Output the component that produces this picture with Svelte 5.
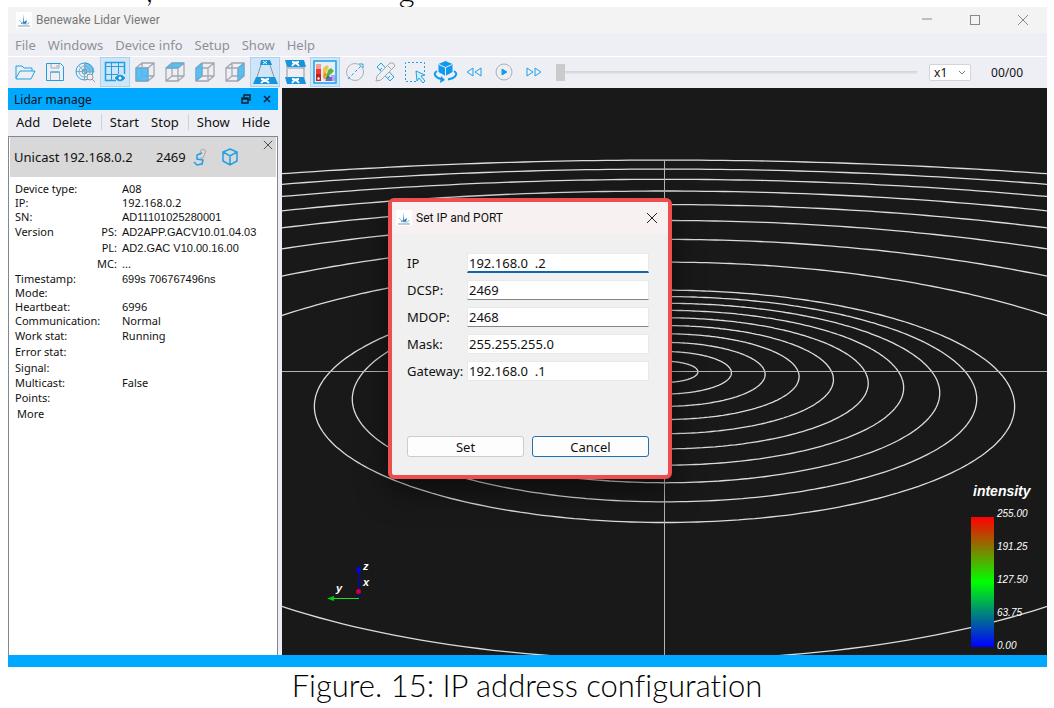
<script>
	const menus = ['File', 'Windows', 'Device info', 'Setup', 'Show', 'Help'];

	// Cube views: one face is filled, the rest is wireframe
	const cubes = [
		{ name: 'Front view', face: '3,8 15,8 15,21 3,21' },
		{ name: 'Top view', face: '3,8 9,3 21,3 15,8' },
		{ name: 'Left view', face: '3,8 9,3 9,16 3,21' },
		{ name: 'Right view', face: '15,8 21,3 21,16 15,21' }
	];

	const details = [
		{ label: 'Device type:', value: 'A08' },
		{ label: 'IP:', value: '192.168.0.2' },
		{ label: 'SN:', value: 'AD11101025280001', plain: true },
		{ label: 'Version', sub: 'PS:', value: 'AD2APP.GACV10.01.04.03', tall: true, plain: true },
		{ label: '', sub: 'PL:', value: 'AD2.GAC V10.00.16.00', tall: true, plain: true },
		{ label: '', sub: 'MC:', value: '...', tall: true },
		{ label: 'Timestamp:', value: '699s 706767496ns', plain: true },
		{ label: 'Mode:', value: '' },
		{ label: 'Heartbeat:', value: '6996' },
		{ label: 'Communication:', value: 'Normal' },
		{ label: 'Work stat:', value: 'Running', tall: true },
		{ label: 'Error stat:', value: '', tall: true },
		{ label: 'Signal:', value: '', tall: true },
		{ label: 'Multicast:', value: 'False' },
		{ label: 'Points:', value: '', tall: true }
	];

	const legend = ['255.00', '191.25', '127.50', '63.75', '0.00'];

	let fields = $state([
		{ id: 'ip', label: 'IP', value: '192.168.0  .2', kind: 'focus' },
		{ id: 'dcsp', label: 'DCSP:', value: '2469', kind: 'line' },
		{ id: 'mdop', label: 'MDOP:', value: '2468', kind: 'line' },
		{ id: 'mask', label: 'Mask:', value: '255.255.255.0', kind: '' },
		{ id: 'gateway', label: 'Gateway:', value: '192.168.0  .1', kind: '' }
	]);

	let speed = $state('x1');
	let frame = $state(0);

	// --- RANGE RINGS ---
	// ground circles seen through a tilted camera
	const radii = [1, 2, 3, 4, 5, 6, 7, 8, 9, 10, 15, 20, 25, 30, 35, 40, 45, 50];
	const CX = 382.5;
	const CY = 283.5;

	function ring(r) {
		let d = '';
		let pen = 'M';
		for (let i = 0; i <= 360; i++) {
			const t = ((i - 90) * Math.PI) / 180;
			const x = r * Math.cos(t);
			const y = r * Math.sin(t);
			const w = 1 + 0.03 * y;
			// behind the camera
			if (w < 0.1) {
				pen = 'M';
				continue;
			}
			d += `${pen}${(CX + (33.4 * x) / w).toFixed(1)} ${(CY - (10.57 * y) / w).toFixed(1)}`;
			pen = 'L';
		}
		return d;
	}
</script>

{#snippet logo()}
	<svg class="logo" viewBox="0 0 16 16" aria-hidden="true">
		<rect width="16" height="16" fill="#fff" />
		<path d="M8 2v8l3-2-1 4H5l1-2 1 1z" fill="#1f78c0" />
		<path d="M3 8l4 4h5l1-2" fill="none" stroke="#8fc6e8" />
		<path d="M2 14h12" stroke="#8a97a5" />
	</svg>
{/snippet}

<main>
	<p class="previous"><span>,</span><span>g</span></p>

	<figure>
		<div class="window">
			<header class="titlebar">
				{@render logo()}
				<h1>Benewake Lidar Viewer</h1>
				<div class="controls">
					<button aria-label="Minimize"><svg viewBox="0 0 12 12"><path d="M1 5h10" /></svg></button>
					<button aria-label="Maximize"><svg viewBox="0 0 12 12"><rect x="1.5" y="1.5" width="9" height="9" /></svg></button>
					<button aria-label="Close"><svg viewBox="0 0 12 12"><path d="M1 1l10 10M11 1L1 11" /></svg></button>
				</div>
			</header>

			<nav class="menubar">
				{#each menus as item}
					<button>{item}</button>
				{/each}
			</nav>

			<div class="toolbar">
				<button aria-label="Open">
					<svg viewBox="0 0 24 24"><path d="M3 18V6h6l2 2h8v3M3 18l4-7h15l-4 8H3z" /></svg>
				</button>
				<button aria-label="Save">
					<svg viewBox="0 0 24 24">
						<path d="M3.5 3.5h14l3 3v14h-17z" />
						<path d="M7.500 20v-8h9v8M8 4v4h8V4M14 5v2" stroke="#9ab" />
						<path d="M7.500 12h9" />
					</svg>
				</button>
				<button aria-label="Point cloud">
					<svg viewBox="0 0 24 24">
						<circle cx="11.500" cy="11.500" r="8.500" />
						<circle cx="11.500" cy="11.500" r="5.500" stroke="#7ab" />
						<circle cx="11.500" cy="11.500" r="2.500" />
						<path d="M12 12V3a9 9 0 0 1 9 9z" fill="#4db3ea" opacity=".7" />
						<path d="M3 11.500h17M11.500 3v17M6 6l11 11" stroke="#8ab" />
						<circle cx="17" cy="17" r="3" stroke="#999" fill="#eeeff5" />
						<path d="M19 19l3 3" stroke="#999" />
					</svg>
				</button>
				<button class="active" aria-label="Grid">
					<svg viewBox="0 0 24 24">
						<path d="M13 20.500H2.500v-18h19V14" stroke-width="1.500" />
						<path d="M8.500 3v17M15.500 3v11M3 14.500h12M3 6.500h18" />
						<path d="M12 18q5-6 10 0q-5 6-10 0z" fill="#1694dc" />
						<circle cx="17" cy="18" r="1.500" fill="#fff" stroke="none" />
					</svg>
				</button>
				{#each cubes as cube}
					<button aria-label={cube.name}>
						<svg viewBox="0 0 24 24">
							<path d="M3 8h12v13H3zM3 8l6-5h12v13l-6 5M15 8l6-5M9 3v13h12M9 16l-6 5" stroke="#a3a8ad" stroke-width="1.300" />
							<polygon points={cube.face} fill="#4cb8f2" fill-opacity=".9" stroke="#6ba9cc" />
						</svg>
					</button>
				{/each}
				<button class="active" aria-label="Perspective">
					<svg viewBox="0 0 24 24">
						<path d="M8 0h9l2 5H7z" fill="#1694dc" stroke="none" />
						<path d="M3 17h19l3 7H0z" fill="#1694dc" stroke="none" />
						<path d="M8 5L4 17M17 5l4 12" stroke="#8d959c" />
						<path d="M10 1l4 3M14 1l-4 3" stroke="#fff" />
						<path d="M8 19q4 0 8 4M16 19q-4 0-8 4" stroke="#fff" stroke-width="1.800" />
					</svg>
				</button>
				<button aria-label="Parallel">
					<svg viewBox="0 0 24 24">
						<path d="M2 0h19l2 7H4zM2 17h19l2 7H4z" fill="#1694dc" stroke="none" />
						<path d="M4 6v12M21 6v12M5 8h16" stroke="#8d959c" />
						<path d="M9 2q4 0 7 4M16 2q-4 0-7 4M9 19q4 0 7 4M16 19q-4 0-7 4" stroke="#fff" stroke-width="1.800" />
					</svg>
				</button>
				<button class="active" aria-label="Colors">
					<svg viewBox="0 0 24 24">
						<rect x="1" y="1" width="22" height="22" fill="#e4effa" stroke-width="1.500" />
						<g stroke="none">
							<path d="M3 4h5v5H3z" fill="#fa9a90" />
							<path d="M3 9h5v5H3z" fill="#ee3a30" />
							<path d="M3 14h5v7H3z" fill="#c21f1c" />
							<path d="M10 8l4-3 2 2-4 7-2 2z" fill="#f6c04b" />
							<path d="M10 16l2-4 2 2-3 6z" fill="#f38b1c" />
							<path d="M15 10l3-2 3 3-5 5-3 2z" fill="#5fb43c" />
							<path d="M12 19l3-4 2 2-3 3z" fill="#2c8a3a" />
							<path d="M18 15h4v6h-4z" fill="#b3a4ee" />
							<path d="M12 21l4-4h3v4z" fill="#7a5fd0" />
							<circle cx="5.500" cy="18.500" r="1.200" fill="#fff" />
						</g>
					</svg>
				</button>
				<button aria-label="Measure diameter">
					<svg viewBox="0 0 24 24">
						<circle cx="12" cy="12" r="8.500" stroke="#adb0b5" />
						<path d="M5 19L19 5" stroke-dasharray="3 2" />
						<path d="M16 4h4v4" />
					</svg>
				</button>
				<button aria-label="Draw">
					<svg viewBox="0 0 24 24">
						<path d="M4 7l4-4 13 14-4 4zM7 10l2-2M15 18l2-2" />
						<path d="M20 3l2 3L8 20l-5 1 1-5L17 3z" fill="#eeeff5" stroke="#a3a8ad" />
						<path d="M15 6l3 3" stroke="#a3a8ad" />
					</svg>
				</button>
				<button aria-label="Select area">
					<svg viewBox="0 0 24 24">
						<path d="M13 21.500H2.500v-19h19V12" stroke-dasharray="2 2" />
						<path d="M13 11l9 4-4 1 4 5-2 2-4-5-2 3z" fill="#d8effb" />
					</svg>
				</button>
				<button aria-label="Rotate">
					<svg viewBox="0 0 24 24">
						<path d="M12.500 1l7 3v8l-7 4-7-4V4z" fill="#0f9af0" stroke="none" />
						<path d="M6 4.500l6.500 3 6.500-3M12.500 7.500V16" stroke="#eeeff5" />
						<path d="M4 11q-5 3 1 7l5 1.500M21 11q5 3-1 7l-5 1.500" stroke="#0f9af0" stroke-width="2" />
						<path d="M8 16l4 4-5 3z" fill="#0f9af0" stroke="none" />
					</svg>
				</button>
				<button aria-label="Rewind">
					<svg viewBox="0 0 24 24"><path d="M10 8v8l-6-4zM18 8v8l-6-4z" /></svg>
				</button>
				<button aria-label="Play">
					<svg viewBox="0 0 24 24">
						<circle cx="11" cy="12" r="8" stroke="#adb0b5" />
						<path d="M9 9l5 3-5 3z" fill="#0f9af0" />
					</svg>
				</button>
				<button aria-label="Forward">
					<svg viewBox="0 0 24 24"><path d="M4 8v8l6-4zM12 8v8l6-4z" /></svg>
				</button>
				<input class="slider" type="range" min="0" max="100" bind:value={frame} aria-label="Frame" />
				<div class="speed">
					<select bind:value={speed} aria-label="Speed">
						<option>x1</option>
						<option>x2</option>
					</select>
					<svg viewBox="0 0 8 8" aria-hidden="true"><path d="M1 2l3 3 3-3" /></svg>
				</div>
				<span class="counter">00/00</span>
			</div>

			<div class="content">
				<aside>
					<div class="dock-title">
						<h2>Lidar manage</h2>
						<button aria-label="Float">
							<svg viewBox="0 0 10 10"><path d="M3 3V1h6v5H7M1 4h6v5H1zM1 5h6" /></svg>
						</button>
						<button aria-label="Close dock">
							<svg viewBox="0 0 10 10"><path d="M2 2l6 6M8 2L2 8" /></svg>
						</button>
					</div>
					<div class="commands">
						<div><button>Add</button><button>Delete</button></div>
						<div><button>Start</button><button>Stop</button></div>
						<div><button>Show</button><button>Hide</button></div>
					</div>
					<div class="devices">
						<div class="device">
							<span class="address">Unicast 192.168.0.2</span>
							<span class="port">2469</span>
							<button aria-label="Link">
								<svg viewBox="0 0 18 18">
									<path d="M8 5l1-3q3-2 5 1l-3 7H8" stroke="#aaa" />
									<path d="M10 5L5 7v4l6 1-1 4-5 1-3-3" stroke-width="1.500" />
								</svg>
							</button>
							<button aria-label="Model">
								<svg viewBox="0 0 18 18">
									<path d="M9 1l7 3v9l-7 4-7-4V4zM2 4l7 4 7-4M9 8v9" stroke-width="1.500" />
								</svg>
							</button>
							<button class="remove" aria-label="Remove device">
								<svg viewBox="0 0 12 12"><path d="M1 1l10 10M11 1L1 11" /></svg>
							</button>
						</div>
						<table>
							<tbody>
								{#each details as row}
									<tr class:tall={row.tall}>
										<th>{row.label}</th>
										<td class="sub">{row.sub ?? ''}</td>
										<td class:plain={row.plain}>{row.value}</td>
									</tr>
								{/each}
							</tbody>
						</table>
						<button class="more">More</button>
					</div>
				</aside>

				<section class="viewport">
					<svg class="rings" viewBox="0 0 765 567" preserveAspectRatio="xMidYMid slice" aria-hidden="true">
						{#each radii as r}
							<path d={ring(r)} />
						{/each}
						<path class="axis" d="M0 283.500H765M382.500 72V567" />
					</svg>

					<svg class="gizmo" viewBox="0 0 50 45">
						<path d="M34.500 40V10" stroke="#00f" />
						<path d="M32 14l2.500-7 2.500 7z" fill="#00f" />
						<path d="M35 40.500H8" stroke="#1fe01f" />
						<path d="M10 38l-7 2.500 7 2.500z" fill="#0c0" />
						<circle cx="34.500" cy="33.500" r="2.500" fill="#c8003c" />
						<text x="39" y="12">z</text>
						<text x="39" y="28">x</text>
						<text x="12" y="34">y</text>
					</svg>

					<div class="legend">
						<h3>intensity</h3>
						<div class="scale">
							<div class="bar"></div>
							<ul>
								{#each legend as tick}
									<li>{tick}</li>
								{/each}
							</ul>
						</div>
					</div>

					<form class="dialog" onsubmit={(e) => e.preventDefault()}>
						<div class="dialog-title">
							{@render logo()}
							<h2>Set IP and PORT</h2>
							<button type="button" aria-label="Close dialog">
								<svg viewBox="0 0 12 12"><path d="M1 1l10 10M11 1L1 11" /></svg>
							</button>
						</div>
						<div class="fields">
							{#each fields as field}
								<label for={field.id}>{field.label}</label>
								<input id={field.id} class={field.kind} type="text" bind:value={field.value} />
							{/each}
						</div>
						<div class="actions">
							<button type="submit">Set</button>
							<button type="button" class="default">Cancel</button>
						</div>
					</form>
				</section>
			</div>

			<footer></footer>
		</div>
		<figcaption>Figure. 15: IP address configuration</figcaption>
	</figure>
</main>

<style>
	:global(body) {
		margin: 0;
		background: #fff;
	}
	main {
		display: flex;
		flex-direction: column;
		min-height: 100vh;
		font-family: 'Noto Sans', sans-serif;
		font-size: 13px;
		color: #111;
	}
	h1, h2, h3, ul, p, figure { margin: 0; padding: 0; font-weight: normal; }
	button {
		font: inherit;
		color: inherit;
		background: none;
		border: none;
		padding: 0;
	}
	svg { display: block; fill: none; stroke: #1f9fe4; }

	/* last line of the paragraph above the figure */
	.previous {
		display: flex;
		align-items: flex-end;
		gap: 246px;
		height: 7px;
		padding-left: 146px;
		overflow: hidden;
		font-family: Lato, sans-serif;
		font-size: 31px;
		font-weight: 300;
		line-height: 34px;
		color: #000;
	}

	figure { display: flex; flex-direction: column; flex: 1; }
	.window { display: flex; flex-direction: column; flex: 1; margin: 0 7px 0 8px; }

	/* TITLE */
	.titlebar {
		display: flex;
		align-items: center;
		height: 26px;
		padding-left: 8px;
		background: #f3f3f3;
		color: #777;
	}
	.logo { width: 16px; height: 16px; stroke: none; }
	.titlebar h1 { flex: 1; margin-left: 4px; font-family: Roboto, sans-serif; font-size: 12px; }
	.controls { display: flex; }
	.controls button { display: grid; place-items: center; width: 48px; height: 24px; }
	.controls svg { width: 12px; height: 12px; stroke: #888; }

	.menubar {
		display: flex;
		align-items: center;
		gap: 12px;
		height: 23px;
		padding-left: 7px;
		background: #eeeff5;
		border-bottom: 1px solid #fff;
		color: #8f9096;
	}

	/* TOOLBAR */
	.toolbar {
		display: flex;
		align-items: center;
		height: 30px;
		padding: 0 24px 1px 2px;
		background: #eeeff5;
	}
	.toolbar button {
		display: grid;
		place-items: center;
		box-sizing: border-box;
		width: 30px;
		height: 30px;
		flex: none;
	}
	.toolbar button.active { background: #cfe5f8; border: 1px solid #a9d2f0; }
	.toolbar button svg { width: 24px; height: 24px; overflow: visible; }
	.slider {
		flex: 1;
		min-width: 0;
		height: 17px;
		margin: 0 12px 0 6px;
		appearance: none;
		background: linear-gradient(#d3d3d6, #e6e6e8) center / 100% 3px no-repeat;
	}
	.slider::-webkit-slider-thumb {
		appearance: none;
		width: 9px;
		height: 17px;
		background: #cbcbcb;
	}
	.speed { position: relative; }
	select {
		display: block;
		width: 42px;
		height: 17px;
		padding: 0 4px;
		appearance: none;
		font: inherit;
		font-size: 12px;
		line-height: 15px;
		color: #111;
		background: #fff;
		border: 1px solid #d4d4d8;
		border-radius: 2px;
	}
	.speed svg { position: absolute; right: 5px; top: 5px; width: 8px; height: 8px; stroke: #777; }
	.counter { margin-left: 20px; font-size: 12px; }

	/* DOCK */
	.content { display: flex; flex: 1; }
	aside {
		display: flex;
		flex-direction: column;
		width: 270px;
		padding-right: 4px;
		background: #eeeff5;
	}
	.dock-title {
		display: flex;
		align-items: center;
		gap: 11px;
		height: 22px;
		padding: 0 6px;
		background: #00a9ff;
	}
	.dock-title h2 { flex: 1; font-size: 12px; }
	.dock-title svg { width: 10px; height: 10px; stroke: #123; stroke-width: 1.5; }
	.commands { display: flex; align-items: center; height: 24px; padding-bottom: 2px; }
	.commands div { display: flex; gap: 12px; padding: 0 9px 0 8px; line-height: 16px; }
	.commands div + div { border-left: 1px solid #d0d1d6; }
	.devices {
		flex: 1;
		padding: 0 1px;
		background: #fff;
		border: 1px solid #828790;
		border-bottom: none;
	}
	.device {
		position: relative;
		display: flex;
		align-items: center;
		height: 40px;
		padding-left: 4px;
		background: #d8d8d8;
	}
	.address { width: 142px; }
	.port { width: 36px; }
	.device button { width: 29px; }
	.device svg { width: 18px; height: 18px; }
	.device .remove { position: absolute; top: 3px; right: 2px; width: 12px; }
	.device .remove svg { width: 12px; height: 10px; stroke: #333; }

	table {
		margin-top: 5px;
		border-collapse: collapse;
		font-size: 11px;
		line-height: 14px;
	}
	th, td { padding: 0; font-weight: normal; text-align: left; white-space: nowrap; }
	th { width: 82px; max-width: 82px; padding-left: 5px; }
	tr { height: 14px; }
	tr.tall { height: 16px; }
	.sub { min-width: 20px; padding-right: 5px; text-align: right; }
	.plain { font-family: 'Liberation Sans', sans-serif; }
	.more { display: block; padding-left: 7px; font-size: 11px; line-height: 16px; }

	/* VIEWPORT */
	.viewport {
		position: relative;
		flex: 1;
		min-height: 480px;
		overflow: hidden;
		background: #191919;
	}
	.rings { position: absolute; inset: 0; width: 100%; height: 100%; }
	.rings path { stroke: #dcdcdc; stroke-width: 1.3; }
	.rings .axis { stroke: #b4b4b4; stroke-width: 1; }
	.gizmo { position: absolute; left: 42px; bottom: 52px; width: 50px; height: 45px; stroke: none; }
	.gizmo text { fill: #fff; font: italic bold 11px 'Liberation Sans', sans-serif; }

	.legend {
		position: absolute;
		right: 16px;
		bottom: 3px;
		width: 60px;
		font-family: 'Liberation Sans', sans-serif;
		font-style: italic;
		font-weight: bold;
		color: #fff;
	}
	.legend h3 { padding-left: 2px; font-size: 14px; font-weight: bold; line-height: 18px; }
	.scale { display: flex; gap: 3px; margin-top: 8px; }
	.bar {
		width: 23px;
		height: 130px;
		margin-top: 9px;
		background: linear-gradient(#f00, #808000 25%, #0f0 50%, #008080 75%, #00f);
	}
	.scale ul {
		display: flex;
		flex-direction: column;
		justify-content: space-between;
		height: 144px;
		list-style: none;
		font-size: 10px;
		line-height: 12px;
	}

	/* DIALOG */
	.dialog {
		position: absolute;
		left: 106px;
		top: 110px;
		box-sizing: border-box;
		width: 284px;
		padding-bottom: 18px;
		background: #f0f0f0;
		border: 4px solid #ee4e4e;
		border-radius: 6px;
		box-shadow: 0 12px 30px rgba(0, 0, 0, 0.5);
	}
	.dialog-title {
		display: flex;
		align-items: center;
		height: 32px;
		padding: 0 10px 0 4px;
		background: #f8f1f2;
	}
	.dialog-title h2 { flex: 1; margin-left: 4px; font-family: Roboto, sans-serif; font-size: 12px; }
	.dialog-title button svg { width: 12px; height: 12px; stroke: #222; }
	.fields {
		display: grid;
		grid-template-columns: 60px 1fr;
		align-items: center;
		row-gap: 7px;
		padding: 19px 19px 0 15px;
	}
	.fields input {
		box-sizing: border-box;
		width: 100%;
		height: 20px;
		padding: 0 1px;
		font: inherit;
		color: #111;
		background: #fff;
		border: 1px solid #e9e9e9;
	}
	.fields .line { border-bottom-color: #858585; }
	.fields .focus { border-bottom: 2px solid #0f66b0; }
	.actions {
		display: grid;
		grid-template-columns: 1fr 1fr;
		gap: 8px;
		padding: 55px 19px 0 15px;
	}
	.actions button {
		height: 21px;
		line-height: 18px;
		background: #fdfdfd;
		border: 1px solid #ccc;
		border-radius: 3px;
	}
	.actions .default { border-color: #1f6fb4; }

	footer { height: 12px; background: #00a9ff; }
	figcaption {
		height: 41px;
		font-family: Lato, sans-serif;
		font-size: 31px;
		font-weight: 300;
		font-variant-ligatures: none;
		line-height: 36px;
		text-align: center;
		color: #000;
	}
</style>
